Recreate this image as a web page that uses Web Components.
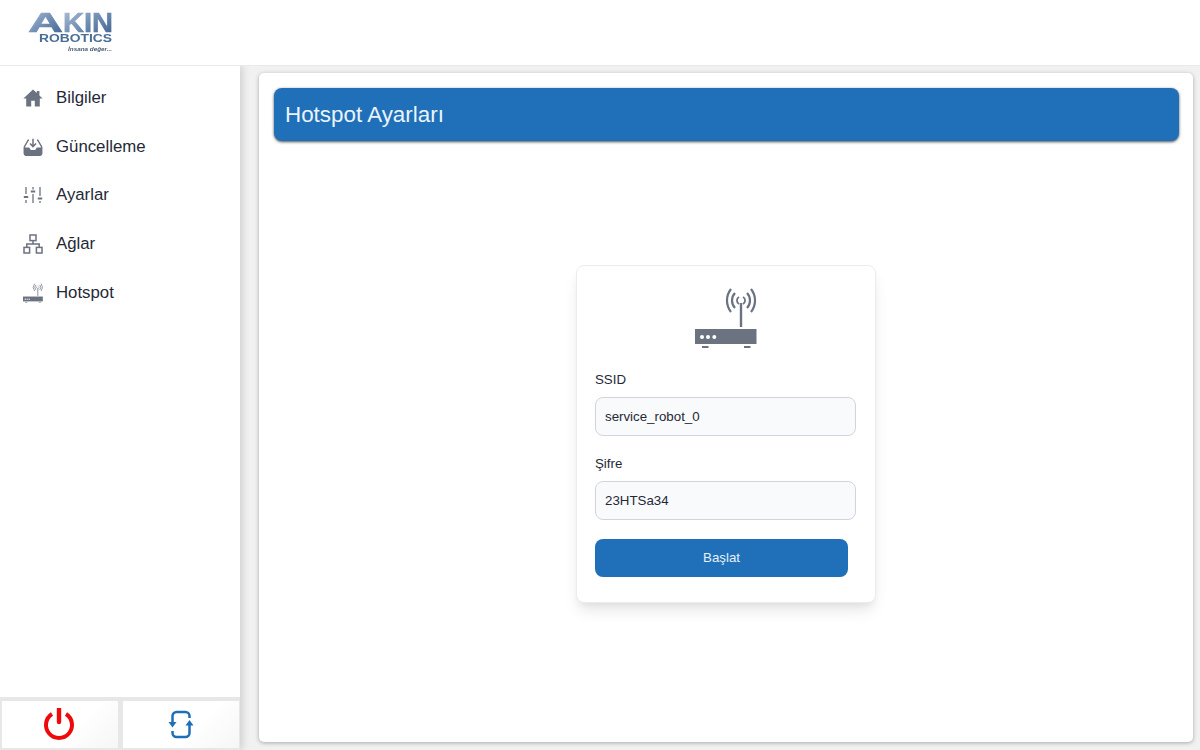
<!DOCTYPE html>
<html lang="tr">
<head>
<meta charset="utf-8">
<title>Hotspot Ayarları</title>
<style>
  html, body { margin: 0; height: 100%; }
  body { font-family: "Liberation Sans", Arial, sans-serif; color: #1f2937; background: #f1f1f2; overflow: hidden; }
  #app { display: grid; grid-template-rows: 66px 1fr; height: 750px; }
  #content { display: grid; grid-template-columns: 240px 1fr; min-height: 0; }
</style>
</head>
<body>
<div id="app">
  <app-header></app-header>
  <div id="content">
    <side-nav>
      <nav-item icon="home">Bilgiler</nav-item>
      <nav-item icon="update">Güncelleme</nav-item>
      <nav-item icon="sliders">Ayarlar</nav-item>
      <nav-item icon="network">Ağlar</nav-item>
      <nav-item icon="router">Hotspot</nav-item>
    </side-nav>
    <main-panel heading="Hotspot Ayarları">
      <hotspot-form></hotspot-form>
    </main-panel>
  </div>
</div>

<script>
const ICONS = {
  home: `<svg viewBox="0 0 20 20" fill="#6b7280"><path d="M10 1.600 .4 10.400h2.800v8h5v-5.600h3.600v5.600h5v-8h2.800l-3.200-2.900V3h-2.600v2.100z"/></svg>`,
  update: `<svg viewBox="0 0 20 20" fill="none"><path d="M6 3.200H5.200L1.400 9.600v7a1.800 1.800 0 0 0 1.800 1.800h13.600a1.800 1.800 0 0 0 1.800-1.800v-7l-3.800-6.400H14" stroke="#6b7280" stroke-width="1.400"/><path d="M.8 10.500h5.400l1.600 2.400h4.400l1.600-2.400h5.400v6.100a2 2 0 0 1-2 2H2.800a2 2 0 0 1-2-2z" fill="#6b7280"/><path d="M10 1.800v7.400M7 6.400 10 9.600l3-3.200" stroke="#6b7280" stroke-width="1.500"/></svg>`,
  sliders: `<svg viewBox="0 0 20 20" fill="none" stroke="#6b7280" stroke-width="1.300"><path d="M3 2v7M3 15v3M10 2v2.500M10 9v9M17 2v9M17 16v2"/><path d="M.8 12h4.400M7.800 6.500h4.400M14.800 13.500h4.400" stroke-width="1.800"/></svg>`,
  network: `<svg viewBox="0 0 20 20" fill="none" stroke="#6b7280" stroke-width="1.500"><rect x="7" y="1" width="6" height="5.600"/><rect x="1" y="13.400" width="5.600" height="5.600"/><rect x="13.400" y="13.400" width="5.600" height="5.600"/><path d="M10 6.600v3.400M3.800 13.400V10h12.400v3.400"/></svg>`,
  router: `<svg viewBox="0 0 62 62" fill="none"><g stroke="#6b7280"><path d="M46 16v24" stroke-width="2.400"/><path d="M44 10A4 4 0 0 0 44 17M48 10A4 4 0 0 1 48 17" stroke-width="1.800"/><path d="M40 6A10.900 10.900 0 0 0 40 21M52 6A10.900 10.900 0 0 1 52 21" stroke-width="2.200"/><path d="M36 2A18.500 18.500 0 0 0 36 25M56 2A18.500 18.500 0 0 1 56 25" stroke-width="2.200"/></g><rect y="42" width="61.500" height="15" fill="#6b7280"/><g fill="#fff"><circle cx="7" cy="50" r="2"/><circle cx="13" cy="50" r="2"/><circle cx="19.300" cy="50" r="2"/></g><path d="M7 60h6.500M49 60h6.500" stroke="#6b7280" stroke-width="2"/></svg>`
};

class AppHeader extends HTMLElement {
  constructor() {
    super();
    this.attachShadow({ mode: 'open' });
    this.shadowRoot.innerHTML = `
      <style>
        :host { display: block; box-sizing: border-box; height: 66px; padding: 3px 0 0 26px; background: #fff; border-bottom: 1px solid #e8e9eb; position: relative; z-index: 2; }
        svg { display: block; filter: blur(.4px); }
        text { font-family: "Liberation Sans", Arial, sans-serif; font-weight: 700; }
      </style>
      <svg width="92" height="52" viewBox="0 0 92 52" aria-label="Akin Robotics">
        <defs>
          <linearGradient id="steel" x1="0" y1="0" x2="1" y2="1">
            <stop offset="0" stop-color="#b4c2d8"/>
            <stop offset=".5" stop-color="#6f8db3"/>
            <stop offset="1" stop-color="#3b5f8c"/>
          </linearGradient>
        </defs>
        <text x="2" y="29" font-size="27" fill="url(#steel)" stroke="url(#steel)" stroke-width=".6" textLength="35" lengthAdjust="spacingAndGlyphs">A</text>
        <text x="37" y="29" font-size="27" fill="url(#steel)" stroke="url(#steel)" stroke-width=".6" textLength="50" lengthAdjust="spacingAndGlyphs">KIN</text>
        <text x="13" y="39" font-size="11" fill="#4a6d96" textLength="73" lengthAdjust="spacingAndGlyphs">ROBOTICS</text>
        <text x="42" y="48" font-size="6" font-style="italic" fill="#4a5a72" textLength="44" lengthAdjust="spacingAndGlyphs">İnsana değer...</text>
      </svg>
    `;
  }
}

class SideNav extends HTMLElement {
  constructor() {
    super();
    this.attachShadow({ mode: 'open' });
    this.shadowRoot.innerHTML = `
      <style>
        :host { display: flex; flex-direction: column; justify-content: space-between; background: #fff; box-shadow: 2px 0 8px rgba(0,0,0,.16); position: relative; z-index: 1; min-height: 0; }
        nav { display: grid; grid-auto-rows: 48.750px; padding-top: 7.500px; }
      </style>
      <nav><slot></slot></nav>
      <power-bar></power-bar>
    `;
  }
}

class NavItem extends HTMLElement {
  constructor() {
    super();
    this.attachShadow({ mode: 'open' });
    this.shadowRoot.innerHTML = `
      <style>
        :host { display: flex; align-items: center; gap: 13px; padding-left: 23px; font-size: 16.800px; color: #1f2937; }
        .icon { width: 20px; height: 20px; flex: none; }
        svg { display: block; width: 20px; height: 20px; }
      </style>
      <span class="icon">${ICONS[this.getAttribute('icon')]}</span>
      <slot></slot>
    `;
  }
}

class PowerBar extends HTMLElement {
  constructor() {
    super();
    this.attachShadow({ mode: 'open' });
    this.shadowRoot.innerHTML = `
      <style>
        :host { display: grid; grid-template-columns: 1fr 1fr; gap: 5px; padding: 4px 1px 2px 2px; height: 53px; box-sizing: border-box; background: #e7e7e8; }
        button { all: unset; display: flex; align-items: center; justify-content: center; background: linear-gradient(135deg, #fff 60%, #f6f6f6); }
        .power { margin-right: 2px; }
      </style>
      <button aria-label="Kapat">
        <svg class="power" width="32" height="33" viewBox="0 0 32 33" fill="none" stroke="#ee0a0a">
          <path d="M9 6.050a13 13 0 1 0 14 0" stroke-width="4"/>
          <path d="M16 1v13" stroke-width="4.400" stroke-linecap="round"/>
        </svg>
      </button>
      <button aria-label="Yeniden başlat">
        <svg width="26" height="30" viewBox="0 0 26 30" fill="none" stroke="#1f6fb8" stroke-width="2.500">
          <path d="M4.500 13V6a4 4 0 0 1 4-4h9a4 4 0 0 1 4 4v2"/>
          <path d="M21.500 15v8a4 4 0 0 1-4 4h-9a4 4 0 0 1-4-4v-2"/>
          <path d="M.5 12h8l-4 5.500zM17.500 15.500l4-5.500 4 5.500z" fill="#1f6fb8" stroke="none"/>
        </svg>
      </button>
    `;
  }
}

class MainPanel extends HTMLElement {
  constructor() {
    super();
    this.attachShadow({ mode: 'open' });
    this.shadowRoot.innerHTML = `
      <style>
        :host { display: flex; flex-direction: column; box-sizing: border-box; margin: 7px 7px 8px 19px; padding: 15px 14px 0 15px; background: #fff; border-radius: 5px; box-shadow: 0 1px 4px rgba(0,0,0,.3); min-height: 0; }
        h1 { margin: 0; height: 53px; box-sizing: border-box; display: flex; align-items: center; padding-left: 11px; font-size: 22.400px; font-weight: 400; color: #eaf4fb; background: #1f70b8; border-radius: 8px; box-shadow: 0 1px 3px rgba(0,0,0,.7); }
        .body { flex: 1; display: flex; align-items: center; justify-content: center; padding: 0 1px 15px 0; }
      </style>
      <h1>${this.getAttribute('heading')}</h1>
      <div class="body"><slot></slot></div>
    `;
  }
}

class TextField extends HTMLElement {
  constructor() {
    super();
    this.attachShadow({ mode: 'open' });
    this.shadowRoot.innerHTML = `
      <style>
        :host { display: block; margin-bottom: 18px; }
        label { display: block; font-size: 13.300px; line-height: 20px; color: #1f2937; margin-bottom: 7px; }
        input { display: block; box-sizing: border-box; width: 100%; height: 39px; padding: 0 9px; font: 13.300px "Liberation Sans", Arial, sans-serif; color: #1f2937; background: #f9fafb; border: 1px solid #d1d5db; border-radius: 8px; outline: none; }
      </style>
      <label><slot></slot></label>
      <input value="${this.getAttribute('value')}">
    `;
  }
}

class HotspotForm extends HTMLElement {
  constructor() {
    super();
    this.attachShadow({ mode: 'open' });
    this.shadowRoot.innerHTML = `
      <style>
        :host { display: block; box-sizing: border-box; width: 300px; height: 338px; padding: 21px 19px 0 18px; background: #fff; border: 1px solid #ebecee; border-radius: 8px; box-shadow: 0 10px 15px -3px rgba(0,0,0,.1), 0 4px 6px -2px rgba(0,0,0,.05); }
        .logo { display: flex; justify-content: center; height: 62px; margin-bottom: 21px; }
        .logo svg { width: 62px; height: 62px; display: block; }
        button { all: unset; display: block; box-sizing: border-box; width: 253px; height: 38px; margin-top: 19px; text-align: center; line-height: 38px; font-size: 13.300px; color: #e6f1fa; background: #1f70b8; border-radius: 8px; }
      </style>
      <div class="logo">${ICONS.router}</div>
      <text-field value="service_robot_0">SSID</text-field>
      <text-field value="23HTSa34">Şifre</text-field>
      <button>Başlat</button>
    `;
  }
}

customElements.define('nav-item', NavItem);
customElements.define('power-bar', PowerBar);
customElements.define('side-nav', SideNav);
customElements.define('app-header', AppHeader);
customElements.define('main-panel', MainPanel);
customElements.define('text-field', TextField);
customElements.define('hotspot-form', HotspotForm);
</script>
</body>
</html>
